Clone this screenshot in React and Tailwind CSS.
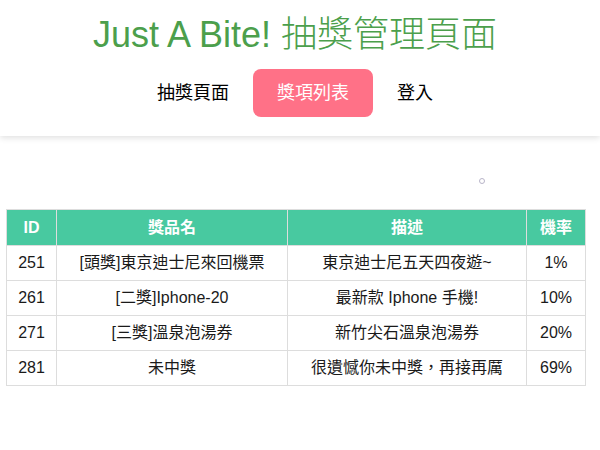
import React from "react";

const prizes = [
  { id: 251, name: "[頭獎]東京迪士尼來回機票", desc: "東京迪士尼五天四夜遊~", rate: "1%" },
  { id: 261, name: "[二獎]Iphone-20", desc: "最新款 Iphone 手機!", rate: "10%" },
  { id: 271, name: "[三獎]溫泉泡湯券", desc: "新竹尖石溫泉泡湯券", rate: "20%" },
  { id: 281, name: "未中獎", desc: "很遺憾你未中獎，再接再厲", rate: "69%" },
];

const font = "font-['Liberation_Sans','Noto_Sans_CJK_TC',sans-serif]";

export default function App() {
  return (
    <div className={`w-[600px] h-[450px] bg-white overflow-hidden ${font}`}>
      <header className="bg-white h-[136px] shadow-[0_2px_6px_rgba(0,0,0,0.12)] flex flex-col items-center">
        <h1 className="mt-[13px] pr-[10px] text-[36px] leading-[44px] text-[#4c9f4c]">
          Just A Bite! <span className="font-light">抽獎管理頁面</span>
        </h1>
        <nav className="mt-[12px] flex items-center text-[18px] leading-[24px] pr-[10px]">
          <a className="px-6 py-3 text-black">抽獎頁面</a>
          <a className="px-6 py-3 rounded-lg bg-[#ff7187] text-white">獎項列表</a>
          <a className="px-6 py-3 text-black">登入</a>
        </nav>
      </header>

      <div className="flex justify-end pr-[115px] pt-[42px] h-[73px]">
        <span className="w-[6px] h-[6px] rounded-full border border-[#b8b4c8]"></span>
      </div>

      <table className="ml-[6px] w-[580px] border-collapse text-[16px] text-[#1a1a1a]">
        <thead>
          <tr className="bg-[#48c9a0] text-white font-bold h-[36px]">
            <th className="w-[50px] border border-[#dddddd]">ID</th>
            <th className="w-[231px] border border-[#dddddd]">獎品名</th>
            <th className="w-[239px] border border-[#dddddd]">描述</th>
            <th className="w-[59px] border border-[#dddddd]">機率</th>
          </tr>
        </thead>
        <tbody>
          {prizes.map((p) => (
            <tr key={p.id} className="h-[35px] text-center">
              <td className="border border-[#dddddd]">{p.id}</td>
              <td className="border border-[#dddddd]">{p.name}</td>
              <td className="border border-[#dddddd]">{p.desc}</td>
              <td className="border border-[#dddddd]">{p.rate}</td>
            </tr>
          ))}
        </tbody>
      </table>
    </div>
  );
}
